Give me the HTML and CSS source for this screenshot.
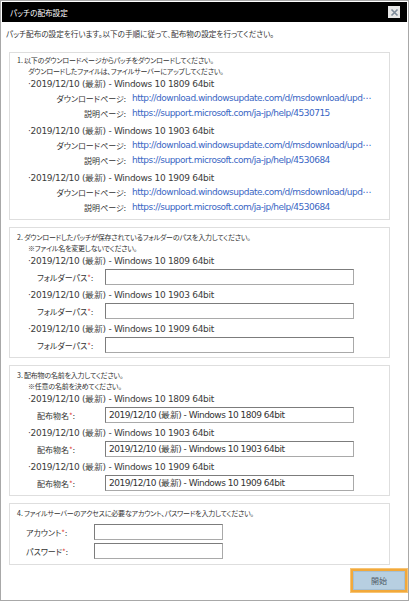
FILE: index.html
```html
<!DOCTYPE html>
<html lang="ja">
<head>
  <meta charset="UTF-8">
  <meta name="viewport" content="width=device-width, initial-scale=1.0">
  <title>パッチの配布設定</title>
  <link rel="stylesheet" href="styles.css">
</head>
<body>
  <div class="dialog">
    <!-- Title bar -->
    <div class="titlebar">
      <span class="title">パッチの配布設定</span>
      <button class="close-btn" aria-label="閉じる">
        <svg width="9" height="9" viewBox="0 0 9 9">
          <path d="M1.5 1.5 L7.5 7.5 M7.5 1.5 L1.5 7.5" stroke="#7d8a99" stroke-width="1.6" fill="none"/>
        </svg>
      </button>
    </div>

    <div class="content">
      <p class="intro">パッチ配布の設定を行います。以下の手順に従って、配布物の設定を行ってください。</p>

      <div class="steps">
        <!-- Step 1: download -->
        <section class="step step-download">
          <div class="step-head">
            <span class="num">1.</span>
            <div class="lines">
              <div>以下のダウンロードページからパッチをダウンロードしてください。</div>
              <div class="sub">ダウンロードしたファイルは、ファイルサーバーにアップしてください。</div>
            </div>
          </div>
          <div class="patch">
            <div class="patch-name">·2019/12/10 (最新) - Windows 10 1809 64bit</div>
            <div class="link-row"><span class="link-label">ダウンロードページ:</span><a class="link" href="#" title="http://download.windowsupdate.com/d/msdownload/update/software/secu/2019/12/windows10.0-kb4530715-x64.msu">http://download.windowsupdate.com/d/msdownload/upd⋯</a></div>
            <div class="link-row"><span class="link-label">説明ページ:</span><a class="link" href="#">https://support.microsoft.com/ja-jp/help/4530715</a></div>
          </div>
          <div class="patch">
            <div class="patch-name">·2019/12/10 (最新) - Windows 10 1903 64bit</div>
            <div class="link-row"><span class="link-label">ダウンロードページ:</span><a class="link" href="#" title="http://download.windowsupdate.com/d/msdownload/update/software/secu/2019/12/windows10.0-kb4530684-x64.msu">http://download.windowsupdate.com/d/msdownload/upd⋯</a></div>
            <div class="link-row"><span class="link-label">説明ページ:</span><a class="link" href="#">https://support.microsoft.com/ja-jp/help/4530684</a></div>
          </div>
          <div class="patch">
            <div class="patch-name">·2019/12/10 (最新) - Windows 10 1909 64bit</div>
            <div class="link-row"><span class="link-label">ダウンロードページ:</span><a class="link" href="#" title="http://download.windowsupdate.com/d/msdownload/update/software/secu/2019/12/windows10.0-kb4530684-x64.msu">http://download.windowsupdate.com/d/msdownload/upd⋯</a></div>
            <div class="link-row"><span class="link-label">説明ページ:</span><a class="link" href="#">https://support.microsoft.com/ja-jp/help/4530684</a></div>
          </div>
        </section>

        <!-- Step 2: folder paths -->
        <section class="step step-form">
          <div class="step-head">
            <span class="num">2.</span>
            <div class="lines">
              <div>ダウンロードしたパッチが保存されているフォルダーのパスを入力してください。</div>
              <div class="sub">※ファイル名を変更しないでください。</div>
            </div>
          </div>
          <div class="patch">
            <div class="patch-name">·2019/12/10 (最新) - Windows 10 1809 64bit</div>
            <div class="field-row"><span class="field-label">フォルダーパス<em>*</em>:</span><input class="field" type="text"></div>
          </div>
          <div class="patch">
            <div class="patch-name">·2019/12/10 (最新) - Windows 10 1903 64bit</div>
            <div class="field-row"><span class="field-label">フォルダーパス<em>*</em>:</span><input class="field" type="text"></div>
          </div>
          <div class="patch">
            <div class="patch-name">·2019/12/10 (最新) - Windows 10 1909 64bit</div>
            <div class="field-row"><span class="field-label">フォルダーパス<em>*</em>:</span><input class="field" type="text"></div>
          </div>
        </section>

        <!-- Step 3: names -->
        <section class="step step-form">
          <div class="step-head">
            <span class="num">3.</span>
            <div class="lines">
              <div>配布物の名前を入力してください。</div>
              <div class="sub">※任意の名前を決めてください。</div>
            </div>
          </div>
          <div class="patch">
            <div class="patch-name">·2019/12/10 (最新) - Windows 10 1809 64bit</div>
            <div class="field-row"><span class="field-label">配布物名<em>*</em>:</span><input class="field" type="text" value="2019/12/10 (最新) - Windows 10 1809 64bit"></div>
          </div>
          <div class="patch">
            <div class="patch-name">·2019/12/10 (最新) - Windows 10 1903 64bit</div>
            <div class="field-row"><span class="field-label">配布物名<em>*</em>:</span><input class="field" type="text" value="2019/12/10 (最新) - Windows 10 1903 64bit"></div>
          </div>
          <div class="patch">
            <div class="patch-name">·2019/12/10 (最新) - Windows 10 1909 64bit</div>
            <div class="field-row"><span class="field-label">配布物名<em>*</em>:</span><input class="field" type="text" value="2019/12/10 (最新) - Windows 10 1909 64bit"></div>
          </div>
        </section>

        <!-- Step 4: account -->
        <section class="step step-account">
          <div class="step-head">
            <span class="num">4.</span>
            <div class="lines">
              <div>ファイルサーバーのアクセスに必要なアカウント、パスワードを入力してください。</div>
            </div>
          </div>
          <div class="account-rows">
            <div class="field-row"><span class="field-label">アカウント<em>*</em>:</span><input class="field field-short" type="text"></div>
            <div class="field-row"><span class="field-label">パスワード<em>*</em>:</span><input class="field field-short" type="password"></div>
          </div>
        </section>
      </div>
    </div>

    <div class="footer">
      <button class="start-btn">開始</button>
    </div>
  </div>
</body>
</html>
```

FILE: styles.css
```css
body {
  margin: 0;
  background-color: #ffffff;
  font-family: "Noto Sans CJK JP", sans-serif;
  font-size: 8px;
  color: #333333;
  font-feature-settings: "palt";
}
.dialog {
  box-sizing: border-box;
  width: 409px;
  height: 601px;
  border: 1px solid #a8a8a8;
  padding: 1px;
  display: flex;
  flex-direction: column;
}
.titlebar {
  height: 20px;
  background-color: #000000;
  display: flex;
  align-items: center;
  justify-content: space-between;
  padding: 0 7px 0 8px;
}
.title {
  color: #ffffff;
  font-size: 7.6px;
}
.close-btn {
  width: 12px;
  height: 12px;
  padding: 0;
  border: none;
  background-color: #e6e6e6;
  display: flex;
  align-items: center;
  justify-content: center;
}
.content {
  flex: 1;
  padding: 0 0 0 4px;
}
.intro {
  margin: 5px 0 0 0;
  line-height: 14px;
  font-size: 7.6px;
}
.steps {
  margin: 11px 0 0 3px;
  width: 381px;
  display: flex;
  flex-direction: column;
  gap: 7px;
}
.step {
  border: 1px solid #dedede;
  padding: 2px 7px 4px 7px;
}
.step-head {
  display: flex;
  line-height: 11px;
  font-size: 7px;
  letter-spacing: -0.2px;
}
.num {
  width: 7px;
  letter-spacing: 0;
}
.sub {
  padding-left: 4px;
}

/* patch title and link rows */
.patch-name {
  padding-left: 11px;
  line-height: 14px;
  font-family: "DejaVu Sans", sans-serif;
  font-size: 9px;
  letter-spacing: -0.3px;
  color: #3c3c3c;
}
.step-download .patch + .patch {
  margin-top: 3px;
}
.link-row {
  display: flex;
  line-height: 15px;
}
.link-label {
  width: 109px;
  margin-right: 6px;
  text-align: right;
  flex-shrink: 0;
}
.link {
  white-space: nowrap;
  color: #3a66c4;
  text-decoration: none;
  font-family: "DejaVu Sans", sans-serif;
  font-size: 9px;
  letter-spacing: -0.5px;
}

/* form rows */
.step-form {
  padding: 4px 7px 3px 7px;
}
.step-form .patch + .patch {
  margin-top: 2px;
}
.field-row {
  display: flex;
  align-items: center;
  height: 18px;
  padding-left: 20px;
}
.field-label {
  width: 68px;
  flex-shrink: 0;
}
.field-label em {
  font-style: normal;
  color: #e0483e;
}
.field {
  box-sizing: border-box;
  width: 249px;
  height: 16px;
  margin: 0;
  padding: 0 3px;
  border: 1px solid #a9a9a9;
  border-top-color: #7c7c7c;
  border-left-color: #7c7c7c;
  font-family: "DejaVu Sans", sans-serif;
  font-size: 9px;
  letter-spacing: -0.5px;
  color: #333333;
}
.step-account {
  padding-top: 4px;
}
.account-rows {
  margin-top: 4px;
  display: flex;
  flex-direction: column;
  gap: 1px;
}
.step-account .field-row {
  padding-left: 9px;
}
.field-short {
  width: 129px;
}

/* footer */
.footer {
  display: flex;
  justify-content: flex-end;
  padding: 0 0 7px 0;
}
.start-btn {
  width: 56px;
  height: 23px;
  border: 2px solid #f2a93b;
  outline: 1px solid #f7c474;
  background-color: #b7cfe1;
  box-shadow: inset 0 0 0 1px #a5bfd3;
  font-family: "Noto Sans CJK JP", sans-serif;
  font-size: 8px;
  color: #4f5a66;
  padding: 0;
}
```
